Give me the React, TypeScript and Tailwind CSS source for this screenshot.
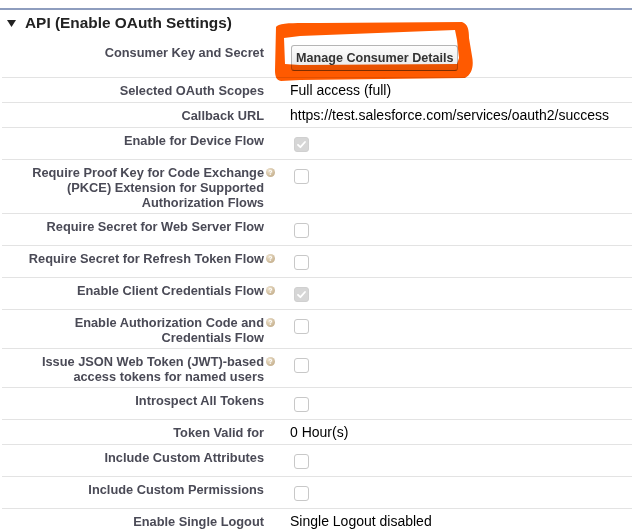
import React from "react";

type Row = {
  label: string[];
  help?: boolean;
  kind: "text" | "check" | "checked" | "button";
  value?: string;
};

const rows: Row[] = [
  { label: ["Consumer Key and Secret"], kind: "button", value: "Manage Consumer Details" },
  { label: ["Selected OAuth Scopes"], kind: "text", value: "Full access (full)" },
  { label: ["Callback URL"], kind: "text", value: "https://test.salesforce.com/services/oauth2/success" },
  { label: ["Enable for Device Flow"], kind: "checked" },
  {
    label: ["Require Proof Key for Code Exchange", "(PKCE) Extension for Supported", "Authorization Flows"],
    help: true,
    kind: "check",
  },
  { label: ["Require Secret for Web Server Flow"], kind: "check" },
  { label: ["Require Secret for Refresh Token Flow"], help: true, kind: "check" },
  { label: ["Enable Client Credentials Flow"], help: true, kind: "checked" },
  { label: ["Enable Authorization Code and", "Credentials Flow"], help: true, kind: "check" },
  { label: ["Issue JSON Web Token (JWT)-based", "access tokens for named users"], help: true, kind: "check" },
  { label: ["Introspect All Tokens"], kind: "check" },
  { label: ["Token Valid for"], kind: "text", value: "0 Hour(s)" },
  { label: ["Include Custom Attributes"], kind: "check" },
  { label: ["Include Custom Permissions"], kind: "check" },
  { label: ["Enable Single Logout"], kind: "text", value: "Single Logout disabled" },
];

function HelpOrb() {
  return (
    <span className="relative top-[-1px] ml-[2px] mr-[-11px] inline-flex h-[9px] w-[9px] items-center justify-center rounded-full bg-[radial-gradient(circle_at_35%_30%,#efe4cf,#b9a07a)] align-middle text-[7px] font-bold leading-none text-white">
      ?
    </span>
  );
}

function Checkbox({ checked }: { checked?: boolean }) {
  if (checked) {
    return (
      <span className="flex h-[15px] w-[15px] items-center justify-center rounded-[3px] border border-[#d0d0d0] bg-[#d6d6d6]">
        <svg width="11" height="11" viewBox="0 0 11 11">
          <path d="M2 5.8 L4.4 8.2 L9 3" fill="none" stroke="#fff" strokeWidth="1.8" strokeLinecap="round" strokeLinejoin="round" />
        </svg>
      </span>
    );
  }
  return <span className="block h-[15px] w-[15px] rounded-[3px] border border-[#c8c8c8] bg-white" />;
}

function DetailRow({ row }: { row: Row }) {
  return (
    <div className="flex border-b border-[#e3e3e3]">
      <div className="w-[274px] shrink-0 pr-[12px] pt-[5px] pb-[3px] text-right text-[12.8px] font-bold leading-[15px] text-[#4a4a56]">
        {row.label.map((line, i) => (
          <React.Fragment key={i}>
            {i > 0 && <br />}
            {line}
            {i === 0 && row.help && <HelpOrb />}
          </React.Fragment>
        ))}
      </div>
      <div className="pl-[14px] text-[14px] leading-[15px] text-black">
        {row.kind === "text" && <div className="pt-[5px] pb-[4px]">{row.value}</div>}
        {row.kind === "button" && (
          <div className="pt-[5px] pb-[6px]">
            <button className="ml-[1px] h-[26px] rounded-[3px] border border-[#b5b5b5] border-b-[#7f7f7f] bg-gradient-to-b from-[#fdfdfd] to-[#e6e6e6] px-[4px] text-[12.6px] font-bold text-[#333]">
              {row.value}
            </button>
          </div>
        )}
        {(row.kind === "check" || row.kind === "checked") && (
          <div className="pl-[4px] pt-[9px] pb-[7px]">
            <Checkbox checked={row.kind === "checked"} />
          </div>
        )}
      </div>
    </div>
  );
}

export default function App() {
  return (
    <div className="relative h-[530px] w-[632px] overflow-hidden bg-white font-['Liberation_Sans',Arial,sans-serif]">
      <div className="pt-[8px]">
        <div className="border-t-2 border-[#8e9dbe]">
          <div className="flex items-center gap-[9px] pl-[7px] pt-[4px] pb-[8px]">
            <svg width="9" height="7" viewBox="0 0 9 7">
              <path d="M0 0 H9 L4.5 7 Z" fill="#222" />
            </svg>
            <h3 className="text-[15.4px] font-bold leading-[18px] text-[#222]">API (Enable OAuth Settings)</h3>
          </div>
          <div className="ml-[2px]">
            {rows.map((row, i) => (
              <DetailRow key={i} row={row} />
            ))}
          </div>
        </div>
      </div>

      {/* hand-drawn orange mark round the button */}
      <svg className="pointer-events-none absolute left-0 top-0 mix-blend-multiply" width="632" height="530" viewBox="0 0 632 530">
        <path
          fillRule="evenodd"
          fill="#ff5a00"
          d="M276 27 C278 22 300 23 320 23 L462 22 C468 24 469 30 469 38 L472 56 C474 66 472 74 465 78 L300 80 L281 81 C276 80 275 76 275 70 Z
             M284 38 L300 36 L455 30 L457 40 L459 58 L457 64 L300 65 L285 64 Z"
        />
      </svg>
    </div>
  );
}
